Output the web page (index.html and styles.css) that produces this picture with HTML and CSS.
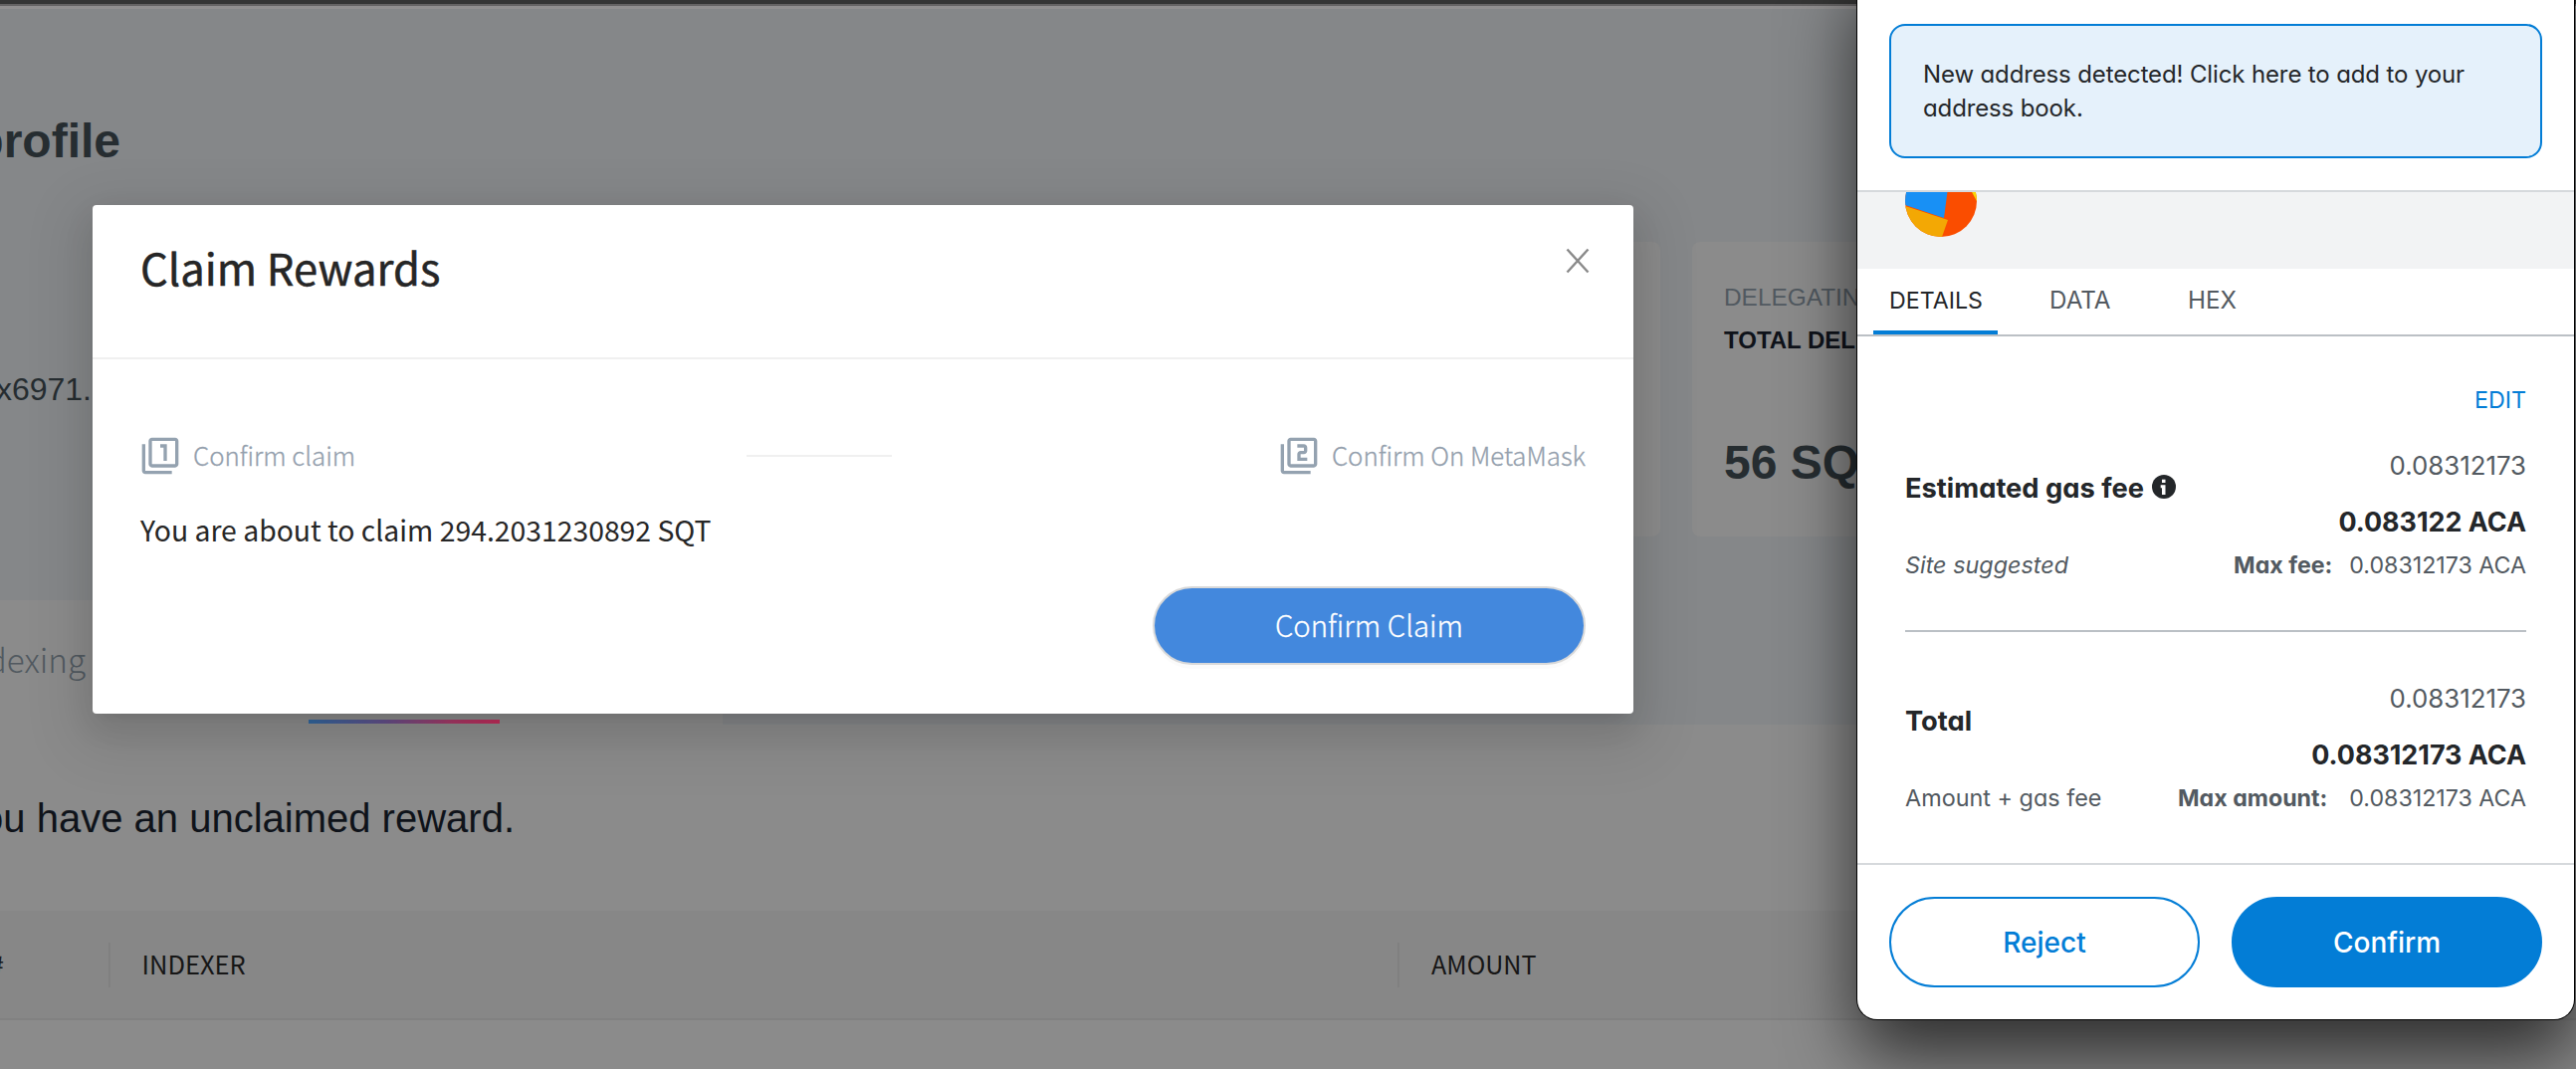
FILE: index.html
```
<!DOCTYPE html>
<html lang="en">
<head>
<meta charset="utf-8">
<title>Claim Rewards</title>
<link rel="stylesheet" href="styles.css">
</head>
<body>
<div class="page">
  <header class="topbar"></header>
  <section class="profile">
    <div class="profile-side">
      <h1 class="profile-title">My profile</h1>
      <div class="profile-address">0x6971.</div>
    </div>
    <div class="cards">
      <div class="card"></div>
      <div class="card">
        <div class="card-label">DELEGATING</div>
        <div class="card-name">TOTAL DELEGATION</div>
        <div class="card-value">56 SQT</div>
      </div>
    </div>
  </section>
  <nav class="sections">
    <div class="section-tabs">
      <div class="section-tab">Indexing</div>
      <div class="section-ink"></div>
    </div>
    <div class="section-rest"></div>
  </nav>
  <p class="notice">You have an unclaimed reward.</p>
  <div class="table-head">
    <div class="th th-index">#</div>
    <div class="th th-indexer">INDEXER</div>
    <div class="th th-amount">AMOUNT</div>
  </div>
</div>

<div class="modal">
  <div class="modal-head">
    <h2 class="modal-title">Claim Rewards</h2>
    <svg class="modal-close" viewBox="0 0 24 26"><path d="M1.5 1.5 22.5 24.5M22.5 1.5 1.5 24.5" fill="none" stroke="#8a8a8a" stroke-width="2.4"/></svg>
  </div>
  <div class="modal-body">
    <div class="steps">
      <div class="step">
        <svg class="step-icon" viewBox="0 0 24 24"><path d="M3 5H1v16c0 1.1.9 2 2 2h16v-2H3V5zm11 10h2V5h-4v2h2v8zm7-14H7c-1.1 0-2 .9-2 2v14c0 1.1.9 2 2 2h14c1.1 0 2-.9 2-2V3c0-1.1-.9-2-2-2zm0 16H7V3h14v14z"/></svg>
        <span>Confirm claim</span>
      </div>
      <div class="step-line"></div>
      <div class="step">
        <svg class="step-icon" viewBox="0 0 24 24"><path d="M3 5H1v16c0 1.1.9 2 2 2h16v-2H3V5zm18-4H7c-1.1 0-2 .9-2 2v14c0 1.1.9 2 2 2h14c1.1 0 2-.9 2-2V3c0-1.1-.9-2-2-2zm0 16H7V3h14v14zm-4-4h-4v-2h2c1.1 0 2-.89 2-2V7c0-1.11-.9-2-2-2h-4v2h4v2h-2c-1.1 0-2 .89-2 2v4h6v-2z"/></svg>
        <span>Confirm On MetaMask</span>
      </div>
    </div>
    <p class="claim-text">You are about to claim 294.2031230892 SQT</p>
    <button class="claim-button">Confirm Claim</button>
  </div>
</div>

<aside class="wallet">
  <div class="wallet-alert-area">
    <div class="wallet-alert">New address detected! Click here to add to your<br>address book.</div>
  </div>
  <div class="wallet-summary">
    <svg class="avatar" viewBox="0 0 72 72">
      <defs><clipPath id="disc"><circle cx="36" cy="36" r="36"/></clipPath></defs>
      <g clip-path="url(#disc)">
        <rect width="72" height="72" fill="#fa4d00"/>
        <path d="M46 0 39 53 0 40V0z" fill="#1890f5"/>
        <path d="M0 41 43 55 37 72H0z" fill="#f3a804"/>
        <path d="M66 25 74 40V25z" fill="#f8d504"/>
      </g>
    </svg>
  </div>
  <div class="wallet-tabs">
    <div class="wallet-tab active">DETAILS</div>
    <div class="wallet-tab">DATA</div>
    <div class="wallet-tab">HEX</div>
  </div>
  <div class="wallet-details">
    <div class="edit">EDIT</div>
    <div class="fee">
      <div class="fee-left">
        <div class="fee-name">Estimated gas fee
          <svg class="info" viewBox="0 0 24 24"><circle cx="12" cy="12" r="12" fill="#24272a"/><rect x="10" y="4.7" width="3.5" height="3.3" fill="#fff"/><path d="M8.7 10.3h4.8V20H10v-6.8H8.7z" fill="#fff"/></svg>
        </div>
        <div class="fee-hint fee-hint-italic">Site suggested</div>
      </div>
      <div class="fee-right">
        <div class="fee-fiat">0.08312173</div>
        <div class="fee-value">0.083122 ACA</div>
        <div class="fee-max"><b>Max fee:</b><span>0.08312173 ACA</span></div>
      </div>
    </div>
    <div class="fee fee-total">
      <div class="fee-left">
        <div class="fee-name">Total</div>
        <div class="fee-hint">Amount + gas fee</div>
      </div>
      <div class="fee-right">
        <div class="fee-fiat">0.08312173</div>
        <div class="fee-value">0.08312173 ACA</div>
        <div class="fee-max"><b>Max amount:</b><span>0.08312173 ACA</span></div>
      </div>
    </div>
  </div>
  <div class="wallet-actions">
    <button class="wallet-button">Reject</button>
    <button class="wallet-button primary">Confirm</button>
  </div>
</aside>
</body>
</html>
```
FILE: styles.css
```
* { box-sizing: border-box; margin: 0; padding: 0; }
body { width: 2588px; height: 1074px; overflow: hidden; position: relative; background: #8b8b8b; font-family: "Noto Sans CJK SC", sans-serif; }
button { font: inherit; border: 0; }
svg { display: block; flex: none; }

/* Dimmed dashboard */
.page { width: 2588px; height: 1074px; overflow: hidden; }
.topbar { height: 9px; background: #918f90; border-top: 4px solid #353535; box-shadow: inset 0 2px 0 #656364; }
.profile { height: 594px; background: #858789; display: flex; justify-content: space-between; font-family: "Liberation Sans", sans-serif; color: #262d31; }
.profile-side { width: 121px; padding-top: 103px; }
.profile-title { display: flex; justify-content: flex-end; font-size: 48px; line-height: 60px; white-space: nowrap; }
.profile-address { display: flex; justify-content: flex-end; margin-top: 199px; padding-right: 29px; font-size: 32px; line-height: 40px; }
.cards { display: grid; grid-template-columns: 600px 600px; gap: 32px; margin-top: 234px; margin-right: 288px; height: 296px; }
.card { background: #8b8b8b; border-radius: 8px; padding: 39px 32px; white-space: nowrap; }
.card-label { font-size: 24.4px; line-height: 34px; color: #515960; }
.card-name { margin-top: 9px; font-size: 24px; line-height: 34px; font-weight: 700; color: #0f131a; }
.card-value { margin-top: 76px; font-size: 48px; line-height: 60px; font-weight: 700; }
.sections { height: 125px; display: flex; }
.section-tabs { width: 726px; padding-top: 34px; }
.section-tab { width: 86px; display: flex; justify-content: flex-end; font-size: 33.2px; font-weight: 300; line-height: 50px; color: #515960; }
.section-ink { width: 192px; height: 4px; margin: 36px 0 0 310px; background: linear-gradient(90deg, #33689f, #64508a 40%, #a83a67 75%, #c22c5a); }
.section-rest { flex: 1; background: #858789; }
.notice { width: 517px; height: 187px; padding-top: 67px; display: flex; justify-content: flex-end; white-space: nowrap; font: 40px/54px "Liberation Sans", sans-serif; color: #0f131a; }
.table-head { height: 110px; background: #878787; border-bottom: 2px solid #818181; display: flex; align-items: center; }
.th { height: 45px; line-height: 42px; font-size: 25.5px; color: #161616; padding-left: 34px; }
.th-index { width: 111px; border-right: 2px solid #808080; padding: 0 105px 0 0; display: flex; justify-content: flex-end; }
.th-indexer { width: 1295px; border-right: 2px solid #808080; padding-left: 31.5px; }
.th-amount { font-size: 25.1px; padding-left: 32px; }

/* Claim dialog */
.modal { position: absolute; left: 93px; top: 206px; width: 1548px; height: 511px; background: #fff; border-radius: 4px; box-shadow: 0 12px 32px rgba(0,0,0,.08), 0 6px 12px -8px rgba(0,0,0,.12), 0 18px 56px 16px rgba(0,0,0,.1); }
.modal-head { height: 155px; border-bottom: 2px solid #f0f0f0; padding: 36px 44px 0 48px; display: flex; justify-content: space-between; }
.modal-title { font-size: 43.6px; line-height: 52px; font-weight: 400; color: #262626; -webkit-text-stroke: .5px #262626; }
.modal-close { width: 24px; height: 26px; margin-top: 7px; }
.modal-body { padding: 77px 48px 0; display: flex; flex-direction: column; }
.steps { display: flex; justify-content: space-between; align-items: center; height: 40px; color: #94a0ad; font-weight: 300; font-size: 25.8px; line-height: 40px; }
.step { display: flex; gap: 13px; white-space: nowrap; }
.step span { position: relative; top: -1px; -webkit-text-stroke: .3px #94a0ad; }
.step-icon { width: 40px; height: 40px; fill: #94a2b0; }
.step-line { width: 146px; height: 2px; background: #f0f0f0; margin-left: 3px; }
.claim-text { margin-top: 32px; height: 46px; line-height: 44px; font-size: 28.35px; color: #262626; white-space: nowrap; }
.claim-button { align-self: flex-end; width: 435px; height: 79px; margin-top: 33px; border: 2px solid #d9d9d9; border-radius: 40px; background: #4388dd; color: #fff; font-size: 29.3px; font-weight: 300; line-height: 70px; padding-bottom: 3px; box-shadow: 0 4px 0 rgba(0,0,0,.015); -webkit-text-stroke: .3px #fff; }

/* Wallet window */
.wallet { position: absolute; left: 1866px; top: -40px; width: 720px; height: 1064px; padding-top: 40px; background: #fff; border-radius: 20px; overflow: hidden; box-shadow: 0 0 0 1px #000, 0 36px 72px rgba(0,0,0,.68); font-family: Inter, sans-serif; font-feature-settings: "cv11"; color: #24272a; display: flex; flex-direction: column; }
.wallet-alert-area { height: 193px; padding: 24px 32px; border-bottom: 2px solid #d6d9dc; }
.wallet-alert { height: 135px; border: 2px solid #037dd6; border-radius: 16px; background: #e5f1fb; padding: 32px 32px; font-size: 24px; line-height: 34px; letter-spacing: -.13px; white-space: nowrap; }
.wallet-summary { height: 77px; background: #f2f3f4; padding-left: 48px; overflow: hidden; }
.avatar { width: 72px; height: 72px; margin-top: -27px; }
.wallet-tabs { height: 68px; border-bottom: 2px solid #bbc0c5; padding-left: 16px; display: flex; gap: 36px; font-size: 24.2px; color: #535a61; }
.wallet-tab { padding: 12px 16px 0; line-height: 40px; height: 66px; min-width: 103px; }
.wallet-tab.active { width: 125px; border-bottom: 4px solid #037dd6; color: #24272a; font-size: 23.2px; }
.wallet-details { height: 529px; padding: 46px 48px 0; }
.edit { text-align: right; color: #037dd6; font-size: 23.3px; line-height: 36px; }
.fee { display: flex; justify-content: space-between; height: 187px; margin-top: 28px; border-bottom: 2px solid #bbc0c5; }
.fee-total { margin-top: 47px; border: 0; }
.fee-name { display: flex; align-items: center; gap: 8px; margin-top: 23px; font-size: 27.3px; line-height: 40px; height: 40px; font-weight: 700; white-space: nowrap; }
.info { width: 24px; height: 24px; position: relative; top: -2px; }
.fee-hint { margin-top: 39px; font-size: 23.4px; line-height: 36px; color: #535a61; }
.fee-hint-italic { font-style: italic; }
.fee-right { text-align: right; white-space: nowrap; }
.fee-fiat { font-size: 25.8px; line-height: 40px; color: #535a61; }
.fee-value { margin-top: 16px; font-size: 26.9px; line-height: 40px; font-weight: 700; }
.fee-max { display: flex; justify-content: flex-end; gap: 17px; margin-top: 6px; font-size: 23.2px; line-height: 36px; color: #535a61; }
.fee-total .fee-max { gap: 22px; }
.wallet-actions { flex: 1; border-top: 2px solid #d6d9dc; padding: 32px; display: grid; grid-template-columns: 1fr 1fr; gap: 32px; }
.wallet-button { height: 91px; border: 2px solid #037dd6; border-radius: 46px; background: #fff; color: #037dd6; font-size: 28px; font-weight: 500; }
.wallet-button.primary { background: #037dd6; color: #fff; }
```
